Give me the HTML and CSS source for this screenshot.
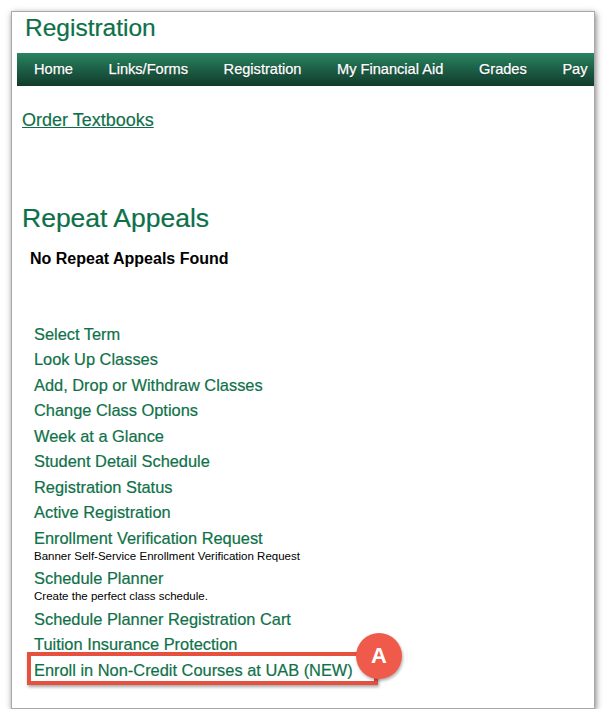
FILE: index.html
```html
<!DOCTYPE html>
<html lang="en">
<head>
<meta charset="utf-8">
<title>Registration</title>
<link rel="stylesheet" href="styles.css">
</head>
<body>
<div class="frame">
  <h1 class="page-title">Registration</h1>
  <nav class="nav">
    <a class="nav-item" href="#">Home</a>
    <a class="nav-item" href="#">Links/Forms</a>
    <a class="nav-item" href="#">Registration</a>
    <a class="nav-item" href="#">My Financial Aid</a>
    <a class="nav-item" href="#">Grades</a>
    <a class="nav-item" href="#">Pay</a>
  </nav>
  <a class="textbooks" href="#">Order Textbooks</a>
  <h2 class="section-title">Repeat Appeals</h2>
  <p class="empty">No Repeat Appeals Found</p>
  <ul class="links">
    <li class="link-item"><a href="#">Select Term</a></li>
    <li class="link-item"><a href="#">Look Up Classes</a></li>
    <li class="link-item"><a href="#">Add, Drop or Withdraw Classes</a></li>
    <li class="link-item"><a href="#">Change Class Options</a></li>
    <li class="link-item"><a href="#">Week at a Glance</a></li>
    <li class="link-item"><a href="#">Student Detail Schedule</a></li>
    <li class="link-item"><a href="#">Registration Status</a></li>
    <li class="link-item"><a href="#">Active Registration</a></li>
    <li class="link-item"><a href="#">Enrollment Verification Request</a><span class="desc">Banner Self-Service Enrollment Verification Request</span></li>
    <li class="link-item"><a href="#">Schedule Planner</a><span class="desc">Create the perfect class schedule.</span></li>
    <li class="link-item"><a href="#">Schedule Planner Registration Cart</a></li>
    <li class="link-item"><a href="#">Tuition Insurance Protection</a></li>
    <li class="link-item highlighted"><a href="#">Enroll in Non-Credit Courses at UAB (NEW)</a><span class="callout-box"></span><span class="callout-badge">A</span></li>
  </ul>
</div>
</body>
</html>
```

FILE: styles.css
```css
html, body {
  margin: 0;
  padding: 0;
  background: #ffffff;
}

body {
  font-family: "Liberation Sans", Arial, Helvetica, sans-serif;
  padding: 11px 11px 0 11px;
}

.frame {
  width: 584px;
  height: 698px;
  box-sizing: border-box;
  border: 1px solid #a8a8a8;
  background: #ffffff;
  box-shadow: 1px 2px 6px rgba(0, 0, 0, 0.5);
  overflow: hidden;
  display: flex;
  flex-direction: column;
  align-items: flex-start;
}

.page-title {
  margin: 2px 0 0 13px;
  font-size: 24.5px;
  line-height: 28px;
  font-weight: normal;
  color: #0c7049;
  -webkit-text-stroke: 0.2px #0c7049;
}

.nav {
  align-self: stretch;
  margin: 11px 0 0 5px;
  height: 33px;
  display: flex;
  flex-wrap: nowrap;
  background: linear-gradient(to bottom, #2b8462 0%, #1d6248 45%, #113b2b 100%);
  overflow: hidden;
}

.nav-item {
  flex: none;
  padding: 0 17.8px;
  line-height: 33px;
  font-size: 14.6px;
  color: #ffffff;
  text-decoration: none;
  text-shadow: 0 1px 1px rgba(0, 0, 0, 0.45);
  -webkit-text-stroke: 0.25px #ffffff;
  white-space: nowrap;
}

.nav-item:first-child {
  padding-left: 17px;
}

.textbooks {
  margin: 23.5px 0 0 10px;
  font-size: 18px;
  line-height: 21px;
  color: #0f6e4a;
  text-decoration: underline;
  -webkit-text-stroke: 0.15px #0f6e4a;
}

.section-title {
  margin: 72.5px 0 0 10px;
  font-size: 26.5px;
  line-height: 30px;
  font-weight: normal;
  color: #0c7049;
  -webkit-text-stroke: 0.2px #0c7049;
}

.empty {
  margin: 15.5px 0 0 18px;
  font-size: 16px;
  line-height: 19px;
  font-weight: bold;
  color: #000000;
}

.links {
  list-style: none;
  margin: 57px 0 0 22px;
  padding: 0;
  display: flex;
  flex-direction: column;
  gap: 6.5px;
}

.link-item {
  display: flex;
  flex-direction: column;
  align-items: flex-start;
}

.link-item a {
  font-size: 16.4px;
  line-height: 19px;
  color: #0f7149;
  text-decoration: none;
  white-space: nowrap;
  -webkit-text-stroke: 0.2px #0f7149;
}

.desc {
  margin-top: 1px;
  font-size: 11.5px;
  line-height: 14px;
  color: #000000;
  white-space: nowrap;
}

.highlighted {
  position: relative;
}

.callout-box {
  position: absolute;
  left: -7px;
  top: -9px;
  width: 351px;
  height: 33px;
  box-sizing: border-box;
  border: 4px solid #e6503e;
  box-shadow: 1px 2px 3px rgba(0, 0, 0, 0.35);
}

.callout-badge {
  position: absolute;
  left: 322px;
  top: -28px;
  width: 46px;
  height: 46px;
  border-radius: 50%;
  background: #f05a4a;
  box-shadow: 1px 2px 3px rgba(0, 0, 0, 0.3);
  color: #ffffff;
  font-size: 22px;
  font-weight: bold;
  line-height: 46px;
  text-align: center;
}
```
